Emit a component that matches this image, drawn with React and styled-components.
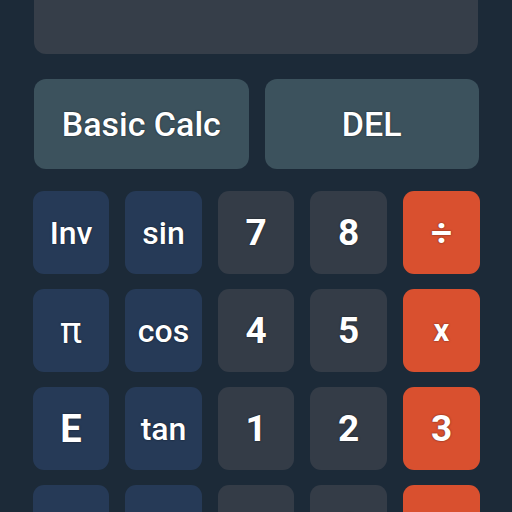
import React from 'react'
import styled, { createGlobalStyle } from 'styled-components'

const GlobalStyle = createGlobalStyle`
	html, body {
		margin: 0;
		padding: 0;
		background: #1c2a38;
		overflow: hidden;
	}
	body {
		font-family: Roboto, 'Noto Sans', sans-serif;
	}
`

const Screen = styled.div`
	width: 512px;
	height: 512px;
	overflow: hidden;
	background: #1c2a38;
	padding: 0 33px;
	box-sizing: border-box;
`

const Display = styled.div`
	height: 120px;
	margin-top: -66px;
	margin-left: 1px;
	margin-right: 1px;
	background: #363e49;
	border-radius: 12px;
`

const TopRow = styled.div`
	display: grid;
	grid-template-columns: 1fr 1fr;
	gap: 16px;
	margin-top: 25px;
	padding-left: 1px;
`

const WideButton = styled.button`
	height: 90px;
	border: none;
	border-radius: 12px;
	background: #3c525d;
	color: #fff;
	font-family: Roboto, sans-serif;
	font-size: 34px;
	font-weight: 500;
	text-shadow: 0 0 2px rgba(0, 0, 0, 0.6);
	padding: 0;
`

const Keypad = styled.div`
	display: grid;
	grid-template-columns: 76px 77px 76px 77px 77px;
	grid-auto-rows: 83px;
	column-gap: 16px;
	row-gap: 15px;
	margin-top: 22px;
`

const colors = {
	sci: '#263a57',
	num: '#343c47',
	op: '#d9502f'
}

const sizes = {
	sci: '32px',
	num: '37px',
	op: '37px'
}

const Key = styled.button`
	border: none;
	border-radius: 11px;
	background: ${(p) => colors[p.kind]};
	color: #fff;
	font-family: Roboto, sans-serif;
	font-size: ${(p) => p.size || sizes[p.kind]};
	font-weight: ${(p) => p.weight || (p.kind === 'sci' ? 500 : 700)};
	text-shadow: 0 0 2px rgba(0, 0, 0, 0.6);
	padding: 0;
`

const keys = [
	['Inv', 'sci'], ['sin', 'sci'], ['7', 'num'], ['8', 'num'], ['÷', 'op'],
	['π', 'sci', '36px', 400], ['cos', 'sci'], ['4', 'num'], ['5', 'num'], ['x', 'op', '31px'],
	['E', 'sci', '38px', 700], ['tan', 'sci'], ['1', 'num'], ['2', 'num'], ['3', 'op'],
	['', 'sci'], ['', 'sci'], ['', 'num'], ['0', 'num'], ['', 'op']
]

export default function App() {
	return (
		<>
			<GlobalStyle />
			<Screen>
				<Display />
				<TopRow>
					<WideButton>Basic Calc</WideButton>
					<WideButton>DEL</WideButton>
				</TopRow>
				<Keypad>
					{keys.map(([label, kind, size, weight], i) => (
						<Key key={i} kind={kind} size={size} weight={weight}>
							{label}
						</Key>
					))}
				</Keypad>
			</Screen>
		</>
	)
}
